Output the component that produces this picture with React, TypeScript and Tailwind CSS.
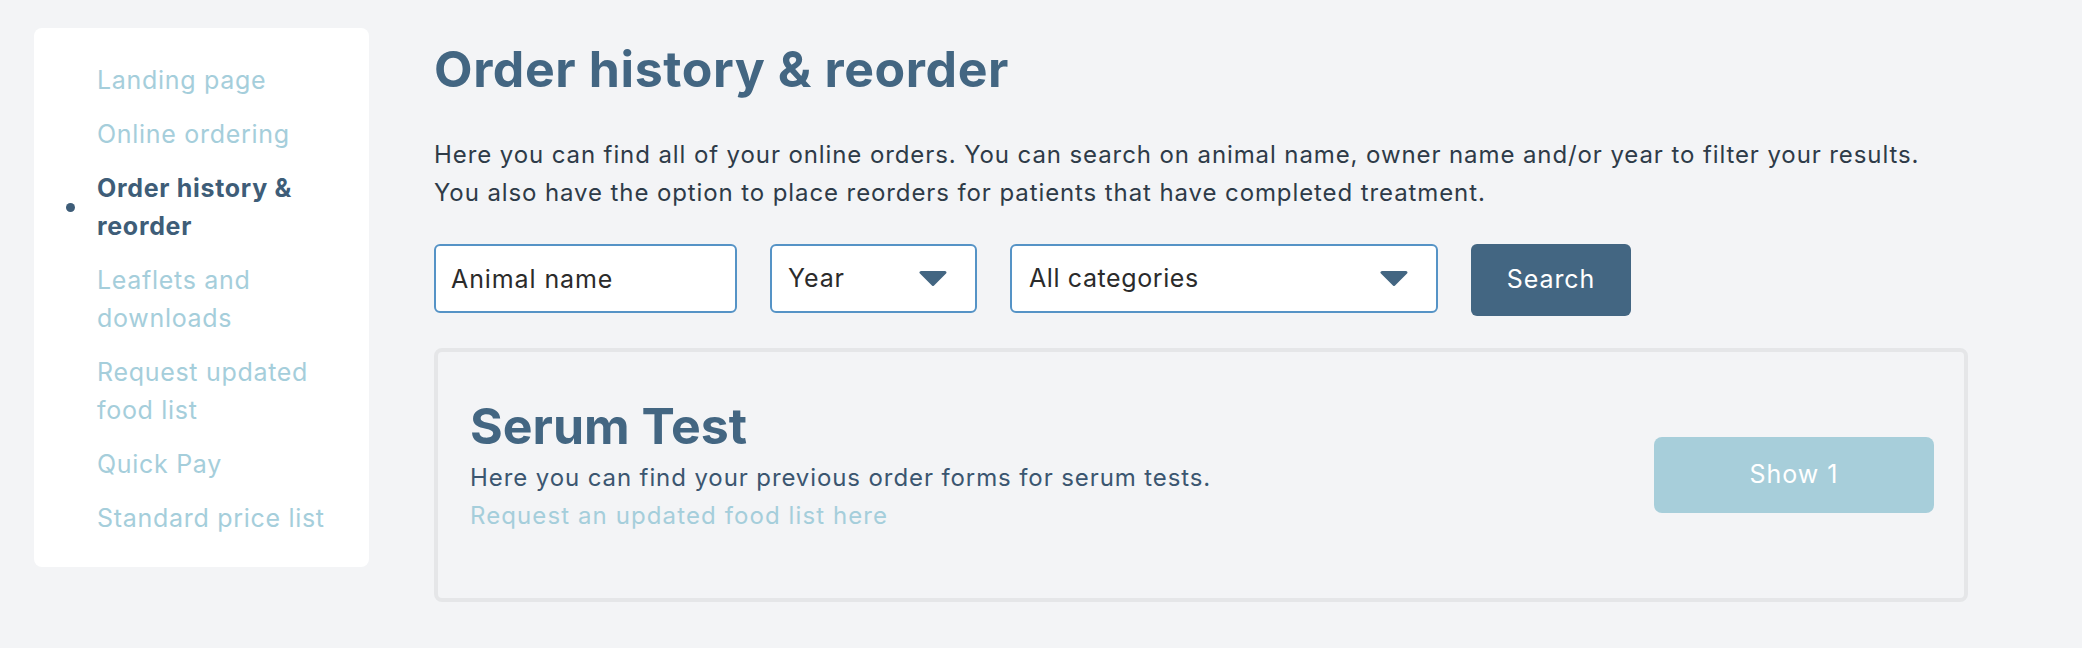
import React from 'react'

const navItems = [
  { label: 'Landing page' },
  { label: 'Online ordering' },
  { label: 'Order history & reorder', active: true },
  { label: 'Leaflets and downloads' },
  { label: 'Request updated food list' },
  { label: 'Quick Pay' },
  { label: 'Standard price list' },
]

const Caret = () => (
  <svg width='28' height='15' viewBox='0 0 28 15' className='shrink-0'>
    <path d='M2 1.5h24L14 13.5z' fill='#436682' stroke='#436682' strokeWidth={3} strokeLinejoin='round' />
  </svg>
)

const Sidebar = () => {
  return (
    <aside className="mt-[28px] w-[335px] shrink-0 self-start rounded-lg bg-white pt-[33px] pb-[30px] pl-[32px]">
      <ul className="flex flex-col gap-[16px]">
        {navItems.map((item) => (
          <li key={item.label} className="flex items-center">
            <span className={`h-[9px] w-[9px] rounded-full ${item.active ? 'bg-[#3e5d78]' : 'bg-transparent'}`} />
            <a
              href="#"
              className={`ml-[22px] w-[240px] text-[25px] leading-[38px] tracking-[0.7px] ${
                item.active ? 'font-bold text-[#3e5d78]' : 'text-[#a5cedb]'
              }`}
            >
              {item.label}
            </a>
          </li>
        ))}
      </ul>
    </aside>
  )
}

const App = () => {
  return (
    <div className="flex min-h-[648px] w-full items-start bg-[#f3f4f6] pl-[34px] font-['Inter',sans-serif]">
      <Sidebar />

      <main className="ml-[65px] w-[1534px] pt-[39px]">
        <h1 className="text-[50px] font-bold leading-[60px] tracking-[0.6px] text-[#436682]">Order history &amp; reorder</h1>
        <p className="mt-[37px] text-[24px] leading-[38px] tracking-[0.9px] text-[#2e3b48]">
          Here you can find all of your online orders. You can search on animal name, owner name and/or year to filter your results.
          <br />
          You also have the option to place reorders for patients that have completed treatment.
        </p>

        <div className="mt-[32px] flex items-start gap-[33px]">
          <input
            type="text"
            placeholder="Animal name"
            className="h-[69px] w-[303px] rounded-md border-2 border-[#5593c6] bg-white px-[15px] text-[25px] tracking-[0.9px] text-[#2b2b2b] placeholder:text-[#2b2b2b] outline-none"
          />
          <button className="flex h-[69px] w-[207px] items-center justify-between rounded-md border-2 border-[#5593c6] bg-white pl-[16px] pr-[28px] text-[25px] tracking-[0.9px] text-[#2b2b2b]">
            Year
            <Caret />
          </button>
          <button className="flex h-[69px] w-[428px] items-center justify-between rounded-md border-2 border-[#5593c6] bg-white pl-[17px] pr-[28px] text-[25px] tracking-[0.6px] text-[#2b2b2b]">
            All categories
            <Caret />
          </button>
          <button className="h-[72px] w-[160px] rounded-md bg-[#436682] text-[25px] tracking-[0.9px] text-white">Search</button>
        </div>

        <div className="mt-[32px] flex items-center justify-between rounded-lg border-4 border-[#e5e6e8] pl-[32px] pr-[30px]">
          <div className="pt-[44px] pb-[63px]">
            <h2 className="text-[50px] font-bold leading-[60px] text-[#436682]">Serum Test</h2>
            <p className="mt-[3px] text-[24px] leading-[38px] tracking-[0.9px] text-[#3b5670]">
              Here you can find your previous order forms for serum tests.
            </p>
            <a href="#" className="block text-[24px] leading-[38px] tracking-[1.1px] text-[#a5cedb]">
              Request an updated food list here
            </a>
          </div>
          <button className="h-[76px] w-[280px] rounded-lg bg-[#a7ceda] text-[25px] tracking-[1px] text-white">Show 1</button>
        </div>
      </main>
    </div>
  )
}

export default App
